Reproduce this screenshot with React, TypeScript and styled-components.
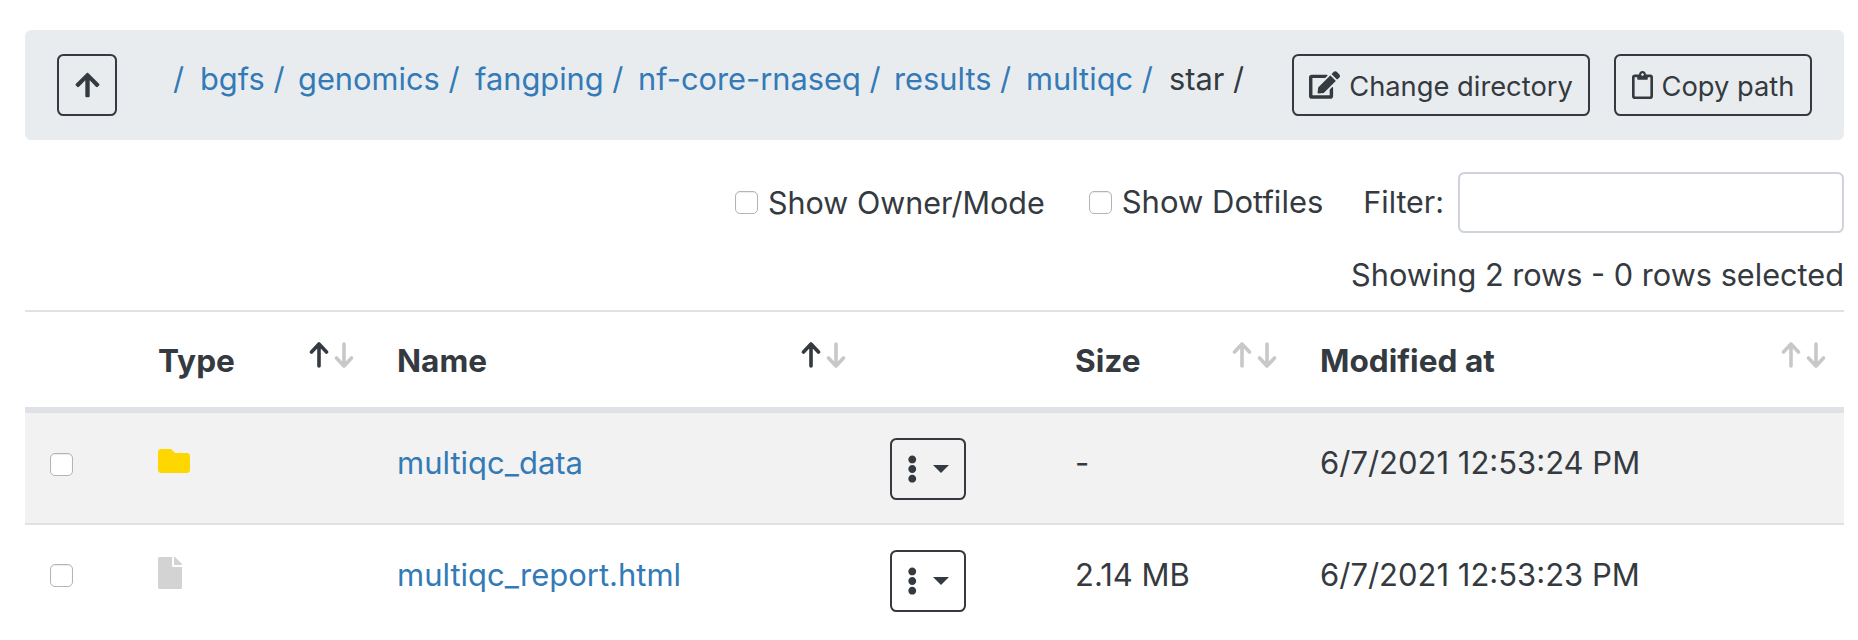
import React from "react";
import styled, { createGlobalStyle } from "styled-components";
import { FaArrowUp, FaEdit, FaRegClipboard, FaFolder, FaFile, FaEllipsisV } from "react-icons/fa";

const Global = createGlobalStyle`
  html, body { margin: 0; padding: 0; background: #fff; }
  body { font-family: Inter, "Liberation Sans", sans-serif; color: #343a40; font-size: 26px; line-height: 1.5; }
  * { box-sizing: border-box; }
`;

const Page = styled.div`
  width: 1858px;
  height: 640px;
  padding: 30px 14px 0 25px;
  overflow: hidden;
`;

const Bar = styled.div`
  height: 110px;
  background: #e9ecef;
  border-radius: 6.4px;
  padding: 24px 32px 24px 32px;
  display: flex;
  align-items: flex-start;
`;

const OutlineButton = styled.button`
  height: 62px;
  padding: 4px 0 0;
  display: inline-flex;
  align-items: center;
  justify-content: center;
  gap: 9px;
  background: transparent;
  border: 2px solid #343a40;
  border-radius: 6.4px;
  color: #343a40;
  font-family: inherit;
  font-size: 27.3px;
  line-height: 1.5;
  white-space: nowrap;
  flex: none;
`;

const UpButton = styled(OutlineButton)`
  width: 60px;
  padding: 0;
  margin-right: 56px;
`;

const Crumbs = styled.nav`
  flex: 1;
  display: flex;
  height: 50px;
  align-items: center;
  white-space: nowrap;
  font-size: 30.8px;
`;

const Crumb = styled.span<{ $w: number }>`
  width: ${(p) => p.$w}px;
  flex: none;
  color: #343a40;
`;

const CrumbLink = styled.a`
  color: #337ab7;
  text-decoration: none;
`;

const ChangeButton = styled(OutlineButton)`
  width: 298px;
  margin-right: 24px;
`;

const CopyButton = styled(OutlineButton)`
  width: 198px;
`;

const EditGlyph = styled(FaEdit)`
  width: 31px;
  height: 28px;
  margin-bottom: 4px;
  flex: none;
`;

const ClipGlyph = styled(FaRegClipboard)`
  width: 21px;
  height: 28px;
  margin-bottom: 4px;
  flex: none;
`;

const UpGlyph = styled(FaArrowUp)`
  width: 25px;
  height: 28px;
`;

const Options = styled.div`
  height: 61px;
  margin-top: 32px;
  display: flex;
  align-items: center;
  justify-content: flex-end;
`;

const CheckLabel = styled.label<{ $mr: number; $size: number }>`
  display: flex;
  align-items: center;
  gap: 10px;
  margin-right: ${(p) => p.$mr}px;
  font-size: ${(p) => p.$size}px;
`;

const Box = styled.span`
  display: block;
  width: 23px;
  height: 23px;
  flex: none;
  background: #fff;
  border: 1.5px solid #b4b4b4;
  border-radius: 5px;
  box-shadow: inset 0 1px 1px rgba(0, 0, 0, 0.08);
`;

const FilterLabel = styled.span`
  font-size: 30.4px;
  margin-right: 14px;
`;

const FilterInput = styled.input`
  width: 386px;
  height: 61px;
  background: #fff;
  border: 2px solid #ced4da;
  border-radius: 6.4px;
`;

const Count = styled.div`
  height: 44px;
  margin-top: 20px;
  text-align: right;
  font-size: 30.7px;
  line-height: 44px;
`;

const Table = styled.table`
  width: 1819px;
  margin-top: 13px;
  border-collapse: collapse;
  table-layout: fixed;
  border-top: 2px solid #dee2e6;
`;

const HeadRow = styled.tr`
  height: 99px;
  border-bottom: 6px solid #dee2e6;
`;

const Th = styled.th`
  padding: 3px 23px 0 19px;
  text-align: left;
  font-size: 31.6px;
  font-weight: 700;
  color: #343a40;

  &:last-child {
    padding-right: 17px;
  }
`;

const ThInner = styled.div`
  display: flex;
  justify-content: space-between;
  align-items: center;
`;

const Row = styled.tr<{ $shaded?: boolean }>`
  height: ${(p) => (p.$shaded ? 114 : 110)}px;
  background: ${(p) => (p.$shaded ? "#f2f2f2" : "#fff")};
  border-bottom: ${(p) => (p.$shaded ? "2px solid #dee2e6" : "none")};
`;

const Td = styled.td`
  padding: 0 19px 9px;
  font-size: 31px;
  vertical-align: middle;
`;

const BoxCell = styled(Td)`
  padding-left: 25px;
  padding-bottom: 8px;
`;

const IconCell = styled(Td)`
  padding-bottom: 14px;
`;

const ButtonCell = styled(Td)`
  padding: 2px 0 0 20px;
`;

const FolderGlyph = styled(FaFolder)`
  display: block;
  width: 32px;
  height: 32px;
  color: #ffd700;
`;

const FileGlyph = styled(FaFile)`
  display: block;
  width: 24px;
  height: 32px;
  color: #d3d3d3;
`;

const NameLink = styled.a`
  color: #337ab7;
  text-decoration: none;
`;

const MenuButton = styled(OutlineButton)`
  width: 76px;
  padding: 0;
  gap: 16px;
`;

const DotsGlyph = styled(FaEllipsisV)`
  width: 10.5px;
  height: 28px;
`;

const Caret = styled.span`
  width: 0;
  height: 0;
  border-top: 8px solid #343a40;
  border-left: 8px solid transparent;
  border-right: 8px solid transparent;
`;

const SortIcon = styled.svg`
  width: 46px;
  height: 26px;
  flex: none;
  margin-top: -12px;
`;

const columns = [114, 239, 492, 186, 245, 543];

function Sort({ up, down }: { up: string; down: string }) {
  return (
    <SortIcon viewBox="0 0 46 26" fill="none" strokeWidth="3.6" strokeLinecap="round" strokeLinejoin="round">
      <path d="M10 24V2M2.5 10 10 2l7.5 8" stroke={up} />
      <path d="M35 2v22M27.5 16 35 24l7.5-8" stroke={down} />
    </SortIcon>
  );
}

const crumbs: [string, number][] = [
  ["bgfs", 98],
  ["genomics", 177],
  ["fangping", 163],
  ["nf-core-rnaseq", 256],
  ["results", 132],
  ["multiqc", 143],
];

const rows = [
  { name: "multiqc_data", size: "-", date: "6/7/2021 12:53:24 PM", folder: true },
  { name: "multiqc_report.html", size: "2.14 MB", date: "6/7/2021 12:53:23 PM", folder: false },
];

export default function App() {
  return (
    <Page>
      <Global />
      <Bar>
        <UpButton aria-label="Up"><UpGlyph /></UpButton>
        <Crumbs>
          <Crumb $w={27}><CrumbLink href="#">/</CrumbLink></Crumb>
          {crumbs.map(([c, w]) => (
            <Crumb key={c} $w={w}><CrumbLink href="#">{c} /</CrumbLink></Crumb>
          ))}
          <Crumb $w={80}>star /</Crumb>
        </Crumbs>
        <ChangeButton><EditGlyph />Change directory</ChangeButton>
        <CopyButton><ClipGlyph />Copy path</CopyButton>
      </Bar>
      <Options>
        <CheckLabel $mr={44} $size={30.5}><Box />Show Owner/Mode</CheckLabel>
        <CheckLabel $mr={40} $size={31}><Box />Show Dotfiles</CheckLabel>
        <FilterLabel>Filter:</FilterLabel>
        <FilterInput />
      </Options>
      <Count>Showing 2 rows - 0 rows selected</Count>
      <Table>
        <colgroup>
          {columns.map((w, i) => <col key={i} width={w} />)}
        </colgroup>
        <thead>
          <HeadRow>
            <Th />
            <Th><ThInner>Type<Sort up="#343a40" down="#c8c8c8" /></ThInner></Th>
            <Th><ThInner>Name<Sort up="#343a40" down="#c8c8c8" /></ThInner></Th>
            <Th />
            <Th><ThInner>Size<Sort up="#c8c8c8" down="#c8c8c8" /></ThInner></Th>
            <Th><ThInner>Modified at<Sort up="#c8c8c8" down="#c8c8c8" /></ThInner></Th>
          </HeadRow>
        </thead>
        <tbody>
          {rows.map((r) => (
            <Row key={r.name} $shaded={r.folder}>
              <BoxCell><Box /></BoxCell>
              <IconCell>{r.folder ? <FolderGlyph /> : <FileGlyph />}</IconCell>
              <Td><NameLink href="#">{r.name}</NameLink></Td>
              <ButtonCell><MenuButton aria-label="Actions"><DotsGlyph /><Caret /></MenuButton></ButtonCell>
              <Td>{r.size}</Td>
              <Td>{r.date}</Td>
            </Row>
          ))}
        </tbody>
      </Table>
    </Page>
  );
}
